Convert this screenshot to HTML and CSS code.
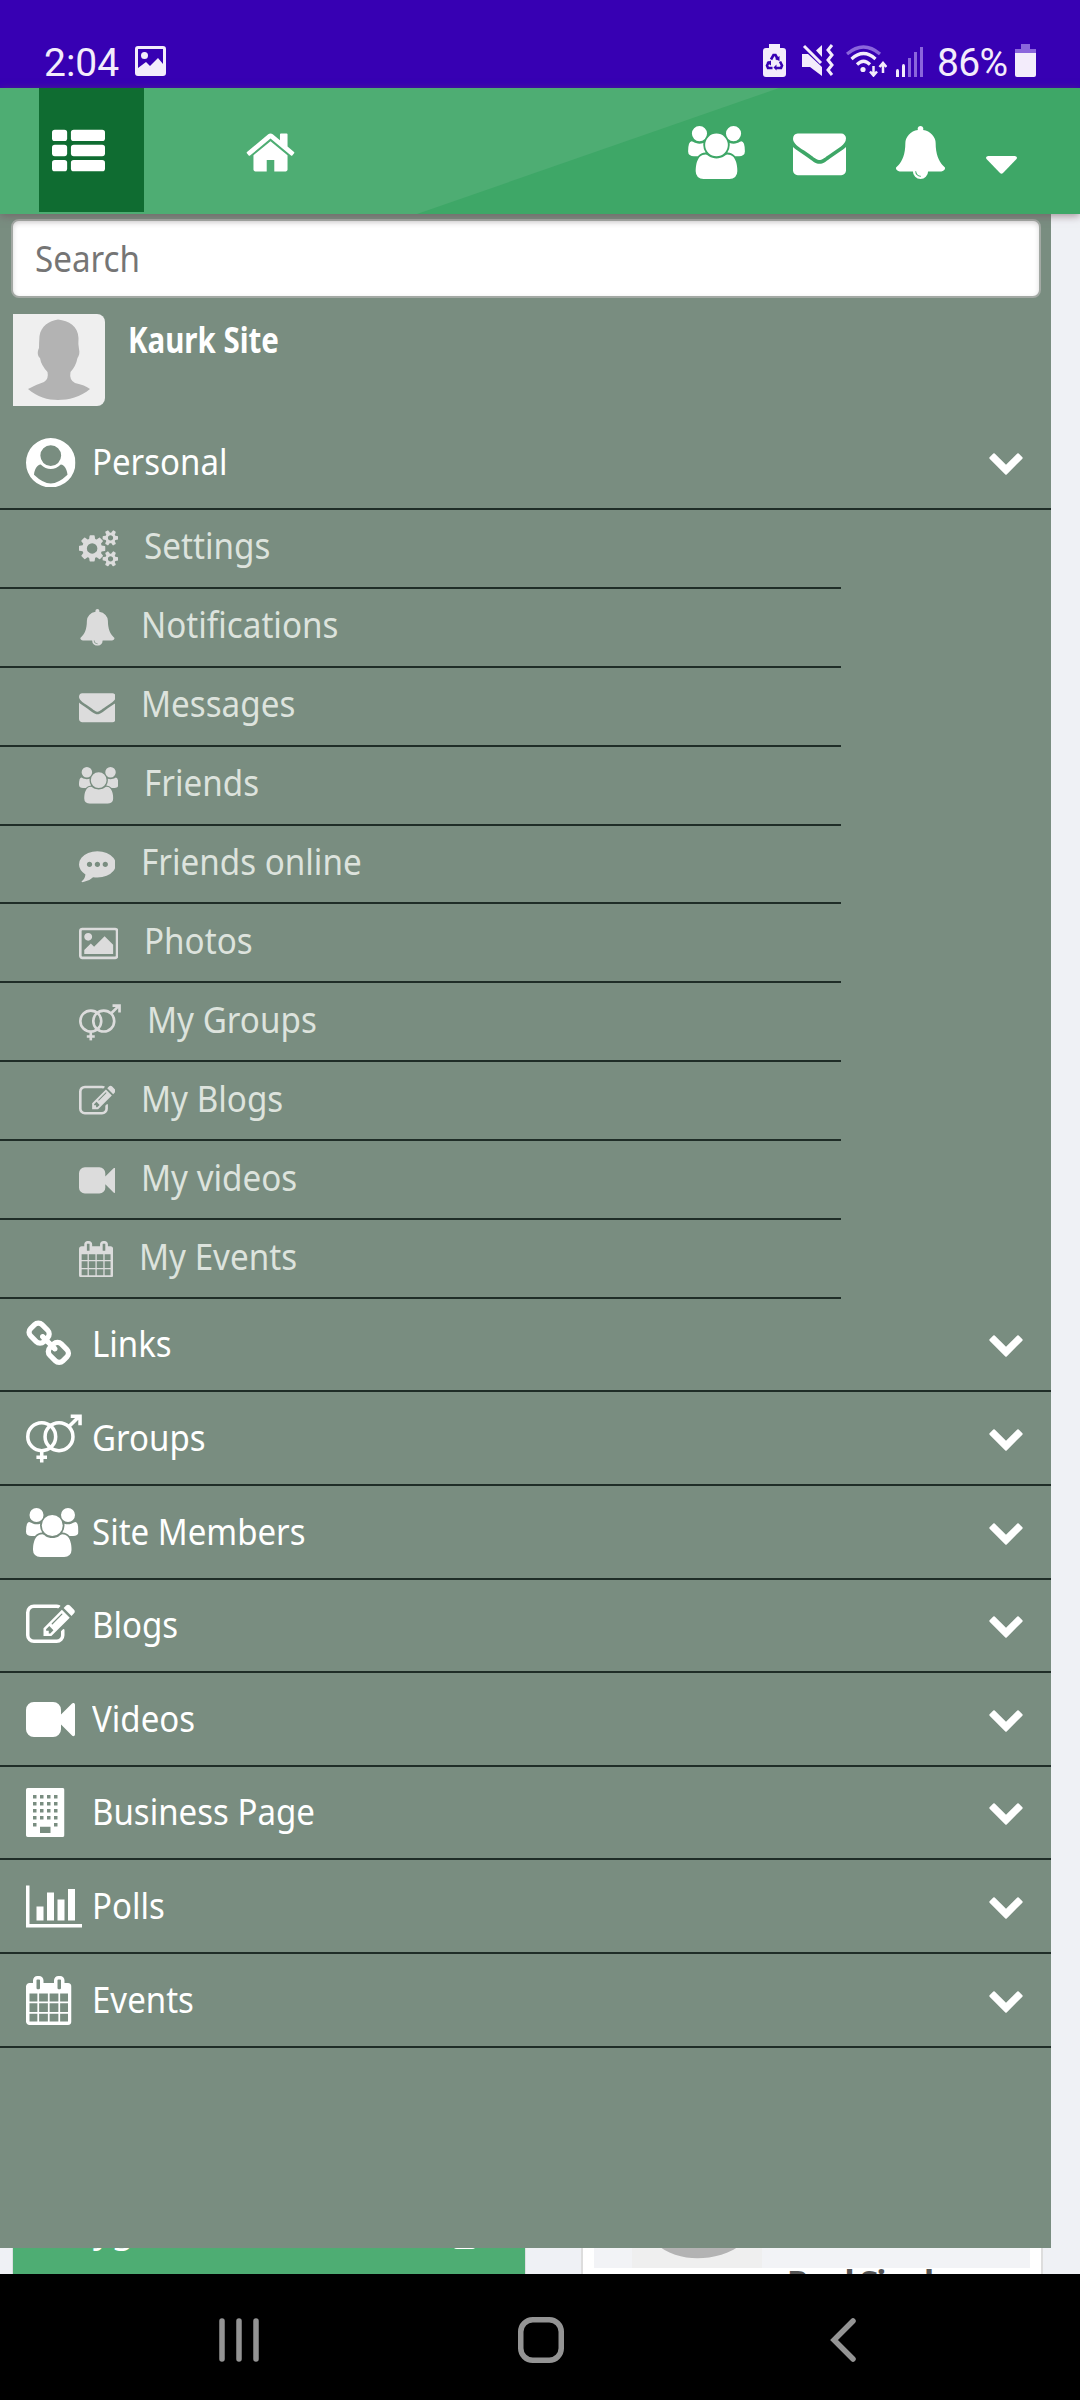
FILE: index.html
```html
<!DOCTYPE html>
<html lang="en">

<head>
    <meta charset="UTF-8">
    <meta name="viewport" content="width=device-width, initial-scale=1.0">
    <title>Kaurk Site</title>
    <link rel="stylesheet" href="styles.css">
</head>

<body>
    <!-- icon set -->
    <svg class="sprite" width="0" height="0">
        <symbol id="th-list" viewBox="0 0 1792 1792">
            <rect y="192" width="512" height="384" rx="96"/><rect x="640" y="192" width="1152" height="384" rx="96"/>
            <rect y="704" width="512" height="384" rx="96"/><rect x="640" y="704" width="1152" height="384" rx="96"/>
            <rect y="1216" width="512" height="384" rx="96"/><rect x="640" y="1216" width="1152" height="384" rx="96"/>
        </symbol>
        <symbol id="home" viewBox="64 0 1664 1792"><path d="M1472 992v480q0 26-19 45t-45 19h-384v-384h-256v384h-384q-26 0-45-19t-19-45v-480q0-1 .5-3t.5-3l575-474 575 474q1 2 1 6zm223-69l-62 74q-8 9-21 11h-3q-13 0-21-7l-692-577-692 577q-12 8-24 7-13-2-21-11l-62-74q-8-10-7-23.5t11-21.5l719-599q32-26 76-26t76 26l244 204v-195q0-14 9-23t23-9h192q14 0 23 9t9 23v408l219 182q10 8 11 21.5t-7 23.5z"/></symbol>
        <symbol id="users" viewBox="-64 0 1920 1792"><path d="M529 896q-162 5-265 128h-134q-82 0-138-40.5t-56-118.5q0-353 124-353 6 0 43.5 21t97.5 42.5 119 21.5q67 0 133-23-5 37-5 66 0 139 81 256zm1071 637q0 120-73 189.5t-194 69.5h-874q-121 0-194-69.5t-73-189.5q0-53 3.5-103.5t14-109 26.5-108.5 43-97.5 62-81 85.5-53.5 111.5-20q10 0 43 21.5t73 48 107 48 135 21.5 135-21.5 107-48 73-48 43-21.5q61 0 111.5 20t85.5 53.5 62 81 43 97.5 26.5 108.5 14 109 3.5 103.5zm-1024-1277q0 106-75 181t-181 75-181-75-75-181 75-181 181-75 181 75 75 181zm704 384q0 159-112.5 271.5t-271.5 112.5-271.5-112.5-112.5-271.5 112.5-271.5 271.5-112.5 271.5 112.5 112.5 271.5zm576 225q0 78-56 118.5t-138 40.5h-134q-103-123-265-128 81-117 81-256 0-29-5-66 66 23 133 23 59 0 119-21.5t97.5-42.5 43.5-21q124 0 124 353zm-128-609q0 106-75 181t-181 75-181-75-75-181 75-181 181-75 181 75 75 181z"/></symbol>
        <symbol id="envelope" viewBox="0 0 1792 1792"><path d="M1792 710v794q0 66-47 113t-113 47h-1472q-66 0-113-47t-47-113v-794q44 49 101 87 362 246 497 345 57 42 92.5 65.5t94.5 48 110 24.5h2q51 0 110-24.5t94.5-48 92.5-65.5q170-123 498-345 57-39 100-87zm0-294q0 79-49 151t-122 123q-376 261-468 325-10 7-42.5 31t-54 38.5-52 32.5-57.5 27-50 9h-2q-23 0-50-9t-57.5-27-52-32.5-54-38.5-42.5-31q-91-64-262-182.5t-205-142.5q-62-42-117-115.5t-55-136.5q0-78 41.5-130t118.5-52h1472q65 0 112.5 47t47.5 113z"/></symbol>
        <symbol id="bell" viewBox="0 0 1792 1792"><path d="M912 1696q0-16-16-16-59 0-101.5-42.5t-42.5-101.5q0-16-16-16t-16 16q0 73 51.5 124.5t124.5 51.5q16 0 16-16zm816-288q0 52-38 90t-90 38h-448q0 106-75 181t-181 75-181-75-75-181h-448q-52 0-90-38t-38-90q50-42 91-88t85-119.5 74.5-158.5 50-206 19.5-260q0-152 117-282.5t307-158.5q-8-19-8-39 0-40 28-68t68-28 68 28 28 68q0 20-8 39 190 28 307 158.5t117 282.5q0 139 19.5 260t50 206 74.5 158.5 85 119.5 91 88z"/></symbol>
        <symbol id="cogs" viewBox="-64 0 1920 1792"><path d="M832 896q0-106-75-181t-181-75-181 75-75 181 75 181 181 75 181-75 75-181zm768 512q0-52-38-90t-90-38-90 38-38 90q0 53 37.5 90.5t90.5 37.5 90.5-37.5 37.5-90.5zm0-1024q0-52-38-90t-90-38-90 38-38 90q0 53 37.5 90.5t90.5 37.5 90.5-37.5 37.5-90.5zm-384 421v185q0 10-7 19.5t-16 10.5l-155 24q-11 35-32 76 34 48 90 115 7 11 7 20 0 12-7 19-23 30-82.5 89.5t-78.5 59.5q-11 0-21-7l-115-90q-37 19-77 31-11 108-23 155-7 24-30 24h-186q-11 0-20-7.5t-10-17.5l-23-153q-34-10-75-31l-118 89q-7 7-20 7-11 0-21-8-144-133-144-160 0-9 7-19 10-14 41-53t47-61q-23-44-35-82l-152-24q-10-1-17-9.5t-7-19.5v-185q0-10 7-19.5t16-10.5l155-24q11-35 32-76-34-48-90-115-7-11-7-20 0-12 7-20 22-30 82-89t79-59q11 0 21 7l115 90q34-18 77-32 11-108 23-154 7-24 30-24h186q11 0 20 7.5t10 17.5l23 153q34 10 75 31l118-89q8-7 20-7 11 0 21 8 144 133 144 160 0 8-7 19-12 16-42 54t-45 60q23 48 34 82l152 23q10 2 17 10.5t7 19.5zm640 533v140q0 16-149 31-12 27-30 52 51 113 51 138 0 4-4 7-122 71-124 71-8 0-46-47t-52-68q-20 2-30 2t-30-2q-14 21-52 68t-46 47q-2 0-124-71-4-3-4-7 0-25 51-138-18-25-30-52-149-15-149-31v-140q0-16 149-31 13-29 30-52-51-113-51-138 0-4 4-7 4-2 35-20t59-34 30-16q8 0 46 46.5t52 67.5q20-2 30-2t30 2q51-71 92-112l6-2q4 0 124 70 4 3 4 7 0 25-51 138 17 23 30 52 149 15 149 31zm0-1024v140q0 16-149 31-12 27-30 52 51 113 51 138 0 4-4 7-122 71-124 71-8 0-46-47t-52-68q-20 2-30 2t-30-2q-14 21-52 68t-46 47q-2 0-124-71-4-3-4-7 0-25 51-138-18-25-30-52-149-15-149-31v-140q0-16 149-31 13-29 30-52-51-113-51-138 0-4 4-7 4-2 35-20t59-34 30-16q8 0 46 46.5t52 67.5q20-2 30-2t30 2q51-71 92-112l6-2q4 0 124 70 4 3 4 7 0 25-51 138 17 23 30 52 149 15 149 31z"/></symbol>
        <symbol id="comment" viewBox="0 0 1792 1792"><path d="M640 896q0-53-37.5-90.5t-90.5-37.5-90.5 37.5-37.5 90.5 37.5 90.5 90.5 37.5 90.5-37.5 37.5-90.5zm384 0q0-53-37.5-90.5t-90.5-37.5-90.5 37.5-37.5 90.5 37.5 90.5 90.5 37.5 90.5-37.5 37.5-90.5zm384 0q0-53-37.5-90.5t-90.5-37.5-90.5 37.5-37.5 90.5 37.5 90.5 90.5 37.5 90.5-37.5 37.5-90.5zm384 0q0 174-120 321.5t-326 233-450 85.5q-110 0-211-18-173 173-435 229-52 10-86 13-12 1-22-6t-13-18q-4-15 20-37 5-5 23.5-21.5t25.5-23.5 23.5-25.5 24-31.5 20.5-37 20-48 14.5-57.5 12.5-72.5q-146-90-229.5-216.5t-83.5-269.5q0-174 120-321.5t326-233 450-85.5 450 85.5 326 233 120 321.5z"/></symbol>
        <symbol id="picture" viewBox="-64 0 1920 1792"><path d="M576 576q0 80-56 136t-136 56-136-56-56-136 56-136 136-56 136 56 56 136zm1024 384v448h-1408v-192l320-320 160 160 512-512zm96-704h-1600q-13 0-22.5 9.5t-9.5 22.5v1216q0 13 9.5 22.5t22.5 9.5h1600q13 0 22.5-9.5t9.5-22.5v-1216q0-13-9.5-22.5t-22.5-9.5zm160 32v1216q0 66-47 113t-113 47h-1600q-66 0-113-47t-47-113v-1216q0-66 47-113t113-47h1600q66 0 113 47t47 113z"/></symbol>
        <symbol id="venus-mars" viewBox="0 0 57 49"><g fill="none" stroke="currentColor" stroke-width="3.6"><circle cx="16" cy="22.7" r="14.2"/><circle cx="33.6" cy="22.7" r="14.2"/><path d="M16 37v12M10.6 43.6h10.8M43.5 12.5L54 2M45.5 1.8H55V11"/></g></symbol>
        <symbol id="pencil" viewBox="0 0 1792 1792"><path d="M888 1184l116-116-152-152-116 116v56h96v96h56zm440-720q-16-16-33 1l-350 350q-17 17-1 33t33-1l350-350q17-17 1-33zm80 594v190q0 119-84.5 203.5t-203.5 84.5h-832q-119 0-203.5-84.5t-84.5-203.5v-832q0-119 84.5-203.5t203.5-84.5h832q63 0 117 25 15 7 18 23 3 17-9 29l-49 49q-14 14-32 8-23-6-45-6h-832q-66 0-113 47t-47 113v832q0 66 47 113t113 47h832q66 0 113-47t47-113v-126q0-13 9-22l64-64q15-15 35-7t20 29zm-96-738l288 288-672 672h-288v-288zm444 132l-92 92-288-288 92-92q28-28 68-28t68 28l152 152q28 28 28 68t-28 68z"/></symbol>
        <symbol id="video" viewBox="0 0 1792 1792"><path d="M1792 352v1088q0 42-39 59-13 5-25 5-27 0-45-19l-403-403v166q0 119-84.5 203.5t-203.5 84.5h-704q-119 0-203.5-84.5t-84.5-203.5v-704q0-119 84.5-203.5t203.5-84.5h704q119 0 203.5 84.5t84.5 203.5v165l403-402q18-19 45-19 12 0 25 5 39 17 39 59z"/></symbol>
        <symbol id="calendar" viewBox="64 0 1664 1792"><path d="M192 1664h288v-288h-288v288zm352 0h320v-288h-320v288zm-352-352h288v-320h-288v320zm352 0h320v-320h-320v320zm-352-384h288v-288h-288v288zm736 736h320v-288h-320v288zm-384-736h320v-288h-320v288zm768 736h288v-288h-288v288zm-384-352h320v-320h-320v320zm-352-864v-288q0-13-9.5-22.5t-22.5-9.5h-64q-13 0-22.5 9.5t-9.5 22.5v288q0 13 9.5 22.5t22.5 9.5h64q13 0 22.5-9.5t9.5-22.5zm736 864h288v-320h-288v320zm-384-384h320v-288h-320v288zm384 0h288v-288h-288v288zm32-480v-288q0-13-9.5-22.5t-22.5-9.5h-64q-13 0-22.5 9.5t-9.5 22.5v288q0 13 9.5 22.5t22.5 9.5h64q13 0 22.5-9.5t9.5-22.5zm384-64v1280q0 52-38 90t-90 38h-1408q-52 0-90-38t-38-90v-1280q0-52 38-90t90-38h128v-96q0-66 47-113t113-47h64q66 0 113 47t47 113v96h384v-96q0-66 47-113t113-47h64q66 0 113 47t47 113v96h128q52 0 90 38t38 90z"/></symbol>
        <symbol id="link" viewBox="64 0 1664 1792"><path d="M1520 1216q0-40-28-68l-208-208q-28-28-68-28-42 0-72 32 3 3 19 18.5t21.5 21.5 15 19 13 25.5 3.5 27.5q0 40-28 68t-68 28q-15 0-27.5-3.5t-25.5-13-19-15-21.5-21.5-18.5-19q-33 31-33 73 0 40 28 68l206 207q27 27 68 27 40 0 68-26l147-146q28-28 28-67zm-703-705q0-40-28-68l-206-207q-28-28-68-28-39 0-68 27l-147 146q-28 28-28 67 0 40 28 68l208 208q27 27 68 27 42 0 72-31-3-3-19-18.5t-21.5-21.5-15-19-13-25.5-3.5-27.5q0-40 28-68t68-28q15 0 27.5 3.5t25.5 13 19 15 21.5 21.5 18.5 19q33-31 33-73zm895 705q0 120-85 203l-147 146q-83 83-203 83-121 0-204-85l-206-207q-83-83-83-203 0-123 88-209l-88-88q-86 88-208 88-120 0-204-84l-208-208q-84-84-84-204t85-203l147-146q83-83 203-83 121 0 204 85l206 207q83 83 83 203 0 123-88 209l88 88q86-88 208-88 120 0 204 84l208 208q84 84 84 204z"/></symbol>
        <symbol id="building" viewBox="0 0 1408 1792"><path fill-rule="evenodd" d="M64 0h1280q64 0 64 64v1664q0 64-64 64h-1280q-64 0-64-64v-1664q0-64 64-64zM256 256v128h128v-128zM512 256v128h128v-128zM768 256v128h128v-128zM1024 256v128h128v-128zM256 512v128h128v-128zM512 512v128h128v-128zM768 512v128h128v-128zM1024 512v128h128v-128zM256 768v128h128v-128zM512 768v128h128v-128zM768 768v128h128v-128zM1024 768v128h128v-128zM256 1024v128h128v-128zM512 1024v128h128v-128zM768 1024v128h128v-128zM1024 1024v128h128v-128zM256 1280v128h128v-128zM1024 1280v128h128v-128zM512 1416v232h384v-232z"/></symbol>
        <symbol id="chart" viewBox="0 0 2048 1792"><path d="M640 896v512h-256v-512zm384-512v1024h-256v-1024zm1024 1152v128h-2048v-1536h128v1408h1920zm-640-896v768h-256v-768zm384-384v1152h-256v-1152z"/></symbol>
        <symbol id="user-circle" viewBox="0 0 49.5 49.5"><path fill-rule="evenodd" d="M24.75 0a24.75 24.75 0 0 1 0 49.5 24.75 24.75 0 0 1 0-49.5zM24.75 7.2a10.4 10.4 0 0 0 0 20.8 10.4 10.4 0 0 0 0-20.8zM8 36.8Q17 45.5 24.75 45.5T41.5 36.8C41 31.5 38.5 27 34.8 26.5Q30 31 24.75 31T14.7 26.5C11 27 8.5 31.5 8 36.8z"/></symbol>
        <symbol id="chevron" viewBox="0 0 34 22"><path d="M.6 4.3L4.3.6Q5 0 5.7.6L17 11.8 28.3.6Q29 0 29.7.6L33.4 4.3Q34 5 33.4 5.7L17.7 21.4Q17 22 16.3 21.4L.6 5.7Q0 5 .6 4.3z"/></symbol>
        <symbol id="face" viewBox="0 0 92 92"><path d="M45 5.5C56 7 65 12 65.5 24Q65 30 66 35C67 39 66 42 64.5 44Q63 52 57.5 58Q56 66 62 69Q72 71 77 75C68 83 55 86 45 86S24 83 15 75Q22 71 31 68Q36 65 34.5 58Q28 51 27 44C24.5 42 24 38 26 34Q26 29 26.5 22C28 12 36 7 45 5.5z"/></symbol>
    </svg>

    <div class="statusbar">
        <span class="clock">2:04</span>
        <svg class="st-photo" viewBox="0 0 31 30"><path fill-rule="evenodd" d="M3 0h25q3 0 3 3v24q0 3-3 3H3q-3 0-3-3V3q0-3 3-3zM3 3v19l8-6 4 4 8-8 5 6V3zM9.5 6a3.5 3.5 0 0 1 0 7 3.5 3.5 0 0 1 0-7z"/></svg>
        <svg class="st-saver" viewBox="0 0 23 33"><path d="M6 0h11v4h3q3 0 3 3v23q0 3-3 3H3q-3 0-3-3V7q0-3 3-3h3z"/><path d="M8 15.5l2.500-4.500h2l2.500 4.500M17 17.500l2 4-1 2.500H13M9.500 24H5l-1-2.500 2-4" fill="none" stroke="#3700b3" stroke-width="2.600"/><path d="M13.500 20.500v6L10.500 23.500zM3.500 18.500L8 16.500v5zM16.500 12v5l-4.500-2z" fill="#3700b3"/></svg>
        <svg class="st-mute" viewBox="0 0 32 32"><path d="M0 10h6L20 23v9L8 23H0zM20 1v12L14 6.500z"/><path d="M2 2l17 17M30 1l-4 5 4 5-4 5 4 5-4 5 4 5" fill="none" stroke="#f3ecfb" stroke-width="3"/></svg>
        <svg class="st-wifi" viewBox="0 0 41 32"><g fill="none" stroke="#f3ecfb" stroke-width="3.2"><path stroke="#8b66dc" d="M1 9Q17.5-5 34 9"/><path d="M5.5 14Q17.500 3 29.500 14M11 19.500Q17.500 13 24 19.500"/><path stroke-width="2.500" d="M27.500 21v9M24 26.500l3.500 4 3.500-4M37 28v-9M33.500 22l3.500-4 3.500 4"/></g><circle cx="17" cy="24.5" r="2.6"/></svg>
        <svg class="st-signal" viewBox="0 0 27 31"><path d="M0 25q0-2 1.500-2T3 25v6H0zM6 20q0-2 1.500-2T9 20v11H6z"/><path fill="#8b66dc" d="M12 12h3v19h-3zM18 6h3v25h-3zM24 1h3v30h-3z"/></svg>
        <span class="percent">86%</span>
        <svg class="st-battery" viewBox="0 0 21 33"><path fill="#8b66dc" d="M6 0h9v5h6v4H0V5h6z"/><path d="M0 9h21v22q0 2-2 2H2q-2 0-2-2z"/></svg>
    </div>

    <div class="topbar">
        <svg class="slope" viewBox="0 0 1080 126"><path d="M417 126L779 0H1080V126z"/></svg>
        <a class="menu-btn"><svg class="icon"><use href="#th-list"/></svg></a>
        <a class="home-btn"><svg class="icon"><use href="#home"/></svg></a>
        <div class="tools">
            <svg class="icon wide"><use href="#users"/></svg>
            <svg class="icon"><use href="#envelope"/></svg>
            <svg class="icon"><use href="#bell"/></svg>
            <svg class="caret" viewBox="0 0 31 18"><path d="M2 0h27q3 1 1.500 3L17 17q-1.500 1.500-3 0L.5 3Q-1 1 2 0z"/></svg>
        </div>
    </div>

    <div class="page">
        <!-- feed behind the drawer -->
        <div class="feed">
            <div class="people">
                <span class="label">yg</span>
                <span class="count">(0)</span>
                <span class="dash"></span>
            </div>
            <div class="card">
                <div class="card-top">
                    <div class="card-photo"><svg viewBox="0 0 92 92"><use href="#face"/></svg></div>
                </div>
                <div class="card-name">Paul Singh</div>
            </div>
        </div>

        <div class="drawer">
            <div class="search"><input type="text" placeholder="Search"></div>
            <div class="profile">
                <svg class="avatar" viewBox="0 0 92 92"><use href="#face"/></svg>
                <span class="name">Kaurk Site</span>
            </div>
            <ul class="menu">
                <li class="item"><span class="ico"><svg class="w-user"><use href="#user-circle"/></svg></span><span class="text">Personal</span><svg class="chevron"><use href="#chevron"/></svg></li>
                <li>
                    <ul class="submenu">
                        <li><svg class="w-l"><use href="#cogs"/></svg><span>Settings</span></li>
                        <li><svg><use href="#bell"/></svg><span>Notifications</span></li>
                        <li><svg><use href="#envelope"/></svg><span>Messages</span></li>
                        <li><svg class="w-l"><use href="#users"/></svg><span>Friends</span></li>
                        <li><svg><use href="#comment"/></svg><span>Friends online</span></li>
                        <li><svg class="w-l"><use href="#picture"/></svg><span>Photos</span></li>
                        <li><svg class="w-xl"><use href="#venus-mars"/></svg><span>My Groups</span></li>
                        <li><svg><use href="#pencil"/></svg><span>My Blogs</span></li>
                        <li><svg><use href="#video"/></svg><span>My videos</span></li>
                        <li><svg class="w-s"><use href="#calendar"/></svg><span>My Events</span></li>
                    </ul>
                </li>
                <li class="item"><span class="ico"><svg class="w-s"><use href="#link"/></svg></span><span class="text">Links</span><svg class="chevron"><use href="#chevron"/></svg></li>
                <li class="item"><span class="ico"><svg class="w-xl"><use href="#venus-mars"/></svg></span><span class="text">Groups</span><svg class="chevron"><use href="#chevron"/></svg></li>
                <li class="item"><span class="ico"><svg class="w-l"><use href="#users"/></svg></span><span class="text">Site Members</span><svg class="chevron"><use href="#chevron"/></svg></li>
                <li class="item"><span class="ico"><svg><use href="#pencil"/></svg></span><span class="text">Blogs</span><svg class="chevron"><use href="#chevron"/></svg></li>
                <li class="item"><span class="ico"><svg><use href="#video"/></svg></span><span class="text">Videos</span><svg class="chevron"><use href="#chevron"/></svg></li>
                <li class="item"><span class="ico"><svg class="w-xs"><use href="#building"/></svg></span><span class="text">Business Page</span><svg class="chevron"><use href="#chevron"/></svg></li>
                <li class="item"><span class="ico"><svg class="w-xl"><use href="#chart"/></svg></span><span class="text">Polls</span><svg class="chevron"><use href="#chevron"/></svg></li>
                <li class="item"><span class="ico"><svg class="w-s"><use href="#calendar"/></svg></span><span class="text">Events</span><svg class="chevron"><use href="#chevron"/></svg></li>
            </ul>
        </div>
    </div>

    <div class="navbar">
        <svg viewBox="0 0 46 46"><path d="M6 4v38M23 4v38M40 4v38"/></svg>
        <svg viewBox="0 0 46 46"><rect x="2.75" y="2.75" width="40.5" height="40.5" rx="12"/></svg>
        <svg viewBox="0 0 46 46"><path d="M33 4L14 23 33 42"/></svg>
    </div>
</body>

</html>
```
FILE: styles.css
```css
* {
    margin: 0;
    padding: 0;
    box-sizing: border-box;
}

body {
    width: 1080px;
    height: 2400px;
    overflow: hidden;
    background: #eff1f5;
    font-family: "Noto Sans", "Open Sans", sans-serif;
}

ul,
li {
    list-style: none;
}

svg {
    display: block;
    flex: none;
    fill: currentColor;
}

.sprite {
    position: absolute;
}

/* status bar */
.statusbar {
    display: flex;
    height: 88px;
    padding: 44px 44px 0 43px;
    background: #3700b3;
    color: #f3ecfb;
    font-family: Roboto, sans-serif;
    font-size: 39px;
    line-height: 38px;
}

.clock {
    width: 92px;
    padding-left: 1px;
}

.st-photo {
    width: 31px;
    height: 30px;
    margin: 2px auto 0 0;
}

.st-saver {
    width: 23px;
    height: 33px;
    margin-right: 16px;
}

.st-mute {
    width: 32px;
    height: 32px;
    margin-right: 12px;
}

.st-wifi {
    width: 41px;
    height: 32px;
    margin: 1px 9px 0 0;
}

.st-signal {
    width: 27px;
    height: 31px;
    margin: 2px 14px 0 0;
}

.percent {
    width: 78px;
    letter-spacing: -.7px;
}

.st-battery {
    width: 21px;
    height: 33px;
}

/* green header */
.topbar {
    position: relative;
    z-index: 3;
    display: flex;
    height: 126px;
    padding-left: 39px;
    background: #4ead73;
    color: #fff;
    box-shadow: 0 2px 8px rgba(110, 80, 90, .6);
}

.slope {
    position: absolute;
    left: 0;
    top: 0;
    width: 1080px;
    height: 126px;
    color: #3ea767;
}

.icon {
    width: 53px;
    height: 53px;
}

.icon.wide {
    width: 57px;
}

.menu-btn {
    position: relative;
    width: 105px;
    height: 124px;
    padding: 36px 13px;
    background: #0f6c31;
}

.home-btn {
    position: relative;
    margin-left: 100px;
    padding-top: 37.5px;
}

.tools {
    position: relative;
    display: flex;
    margin-left: auto;
    padding: 38px 63px 0 0;
}

.tools .icon {
    margin-right: 48px;
}

.tools .icon:nth-child(3) {
    margin-right: 39px;
}

.caret {
    width: 31px;
    height: 18px;
    margin-top: 29.5px;
}

/* page */
.page {
    position: relative;
    height: 2060px;
}

.feed {
    display: flex;
    align-items: flex-end;
    height: 2060px;
    padding-left: 13px;
    overflow: hidden;
}

.people {
    display: flex;
    width: 512px;
    height: 70px;
    padding: 1px 0 0 80px;
    background: #4ead73;
    color: #fff;
    font-size: 36px;
    line-height: 48px;
    box-shadow: 0 0 1px #888;
}

.count {
    margin-left: 86px;
    letter-spacing: -2px;
}

.dash {
    width: 23px;
    height: 30px;
    margin: 14px 49px 0 auto;
    border-radius: 4px;
    background: #fff;
}

.card {
    width: 462px;
    height: 150px;
    margin-left: 56px;
    padding: 0 11px;
    border: solid #ddd;
    border-width: 0 2px;
    background: #fff;
}

.card-top {
    height: 144px;
    padding-left: 38px;
    background: #f2f3f6;
}

.card-photo {
    width: 130px;
    height: 144px;
    padding-top: 9px;
    background: #efefef;
    color: #b3b3b3;
}

.card-photo svg {
    width: 134px;
    height: 134px;
}

.card-name {
    padding-left: 193px;
    color: #555;
    font-size: 34px;
    font-weight: bold;
    line-height: 29px;
    letter-spacing: -2px;
    white-space: nowrap;
}

/* drawer */
.drawer {
    position: absolute;
    left: 0;
    top: 0;
    width: 1051px;
    height: 2034px;
    padding-top: 5px;
    background: #798d80;
    color: #fff;
    font-size: 35.5px;
}

.search {
    width: 1030px;
    height: 79px;
    margin-left: 11px;
    padding-left: 22px;
    border: 2px solid #a3a9a4;
    border-radius: 8px;
    background: #fff;
    box-shadow: inset 0 2px 5px rgba(0, 0, 0, .15);
}

.search input {
    width: 900px;
    height: 73px;
    border: 0;
    background: none;
    font: inherit;
    transform: scaleX(.935);
    transform-origin: left;
}

.search input::placeholder {
    color: #757575;
}

.profile {
    display: flex;
    height: 118.4px;
    padding: 16px 13px 0;
}

.avatar {
    width: 92px;
    height: 92px;
    border-radius: 0 8px 8px 0;
    background: #efefef;
    color: #b3b3b3;
}

.name {
    margin-left: 23px;
    font-weight: bold;
    line-height: 51px;
    transform: scaleX(.83);
    transform-origin: left;
}

.item {
    display: flex;
    height: 93.6px;
    padding: 21.6px 28px 0 26px;
    border-bottom: 2px solid #1f2d27;
}

.ico {
    width: 65.5px;
}

.ico svg {
    width: 49px;
    height: 49px;
}

.ico .w-xs {
    width: 38.5px;
}

.ico .w-s {
    width: 45.5px;
}

.ico .w-user {
    width: 49.5px;
    height: 49.5px;
}

.ico .w-l {
    width: 52.5px;
}

.ico .w-xl {
    width: 56px;
}

.text {
    line-height: 46px;
    transform: scaleX(.93);
    transform-origin: left;
}

.chevron {
    width: 34px;
    height: 22px;
    margin: 15px 0 0 auto;
}

.submenu {
    width: 841px;
    color: #dde3dd;
}

.submenu li {
    display: flex;
    height: 78.9px;
    padding: 20.5px 0 0 78.7px;
    border-bottom: 2px solid #1f2d27;
    line-height: 31px;
}

.submenu span {
    transform: scaleX(.935);
    transform-origin: left;
}

.submenu svg {
    width: 36.8px;
    height: 36.8px;
    margin-right: 26px;
    color: #dcdcdc;
}

.submenu .w-s {
    width: 34.2px;
}

.submenu .w-l {
    width: 39.4px;
}

.submenu .w-xl {
    width: 42px;
}

/* android buttons */
.navbar {
    position: relative;
    display: flex;
    justify-content: space-between;
    height: 126px;
    padding: 43px 214px 0 216px;
    background: #000;
}

.navbar svg {
    width: 46px;
    height: 46px;
    fill: none;
    stroke: #949494;
    stroke-width: 5.5;
    stroke-linecap: round;
}
```
